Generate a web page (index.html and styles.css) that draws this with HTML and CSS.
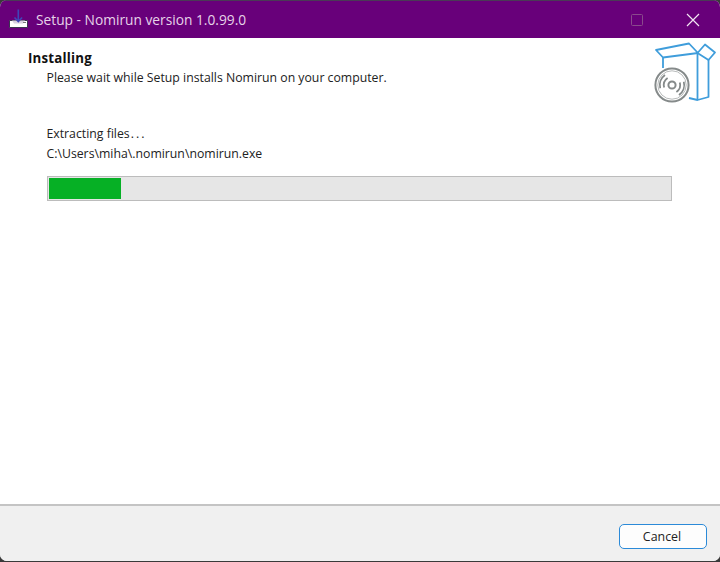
FILE: index.html
```html
<!DOCTYPE html>
<html lang="en">
<head>
<meta charset="utf-8">
<title>Setup - Nomirun version 1.0.99.0</title>
<link rel="stylesheet" href="styles.css">
</head>
<body>
<div class="window">
  <header class="titlebar">
    <svg class="app-icon" width="20" height="20" viewBox="0 0 20 20">
      <path d="M0.5 11.5H18.5V18.5H0.5Z" fill="#fff" stroke="#3a3550" stroke-width="1"/>
      <path d="M3 11.5H16L14 14.5H5Z" fill="#d8d0e0"/>
      <rect x="14" y="13" width="3" height="1" fill="#777"/>
      <path d="M9.3 0.5V12M5.5 8.5L9.3 12.5L13.1 8.5" fill="none" stroke="#3f46b8" stroke-width="1.6"/>
    </svg>
    <span class="title">Setup - Nomirun version 1.0.99.0</span>
    <div class="controls">
      <span class="ctl"></span>
      <span class="ctl">
        <svg width="12" height="12" viewBox="0 0 12 12"><rect x="0.5" y="0.5" width="11" height="11" rx="1" fill="none" stroke="#8a4a8c"/></svg>
      </span>
      <span class="ctl">
        <svg width="14" height="14" viewBox="0 0 14 14"><path d="M1 1L13 13M13 1L1 13" stroke="#f2e6f2" stroke-width="1.2" fill="none"/></svg>
      </span>
    </div>
  </header>
  <section class="head">
    <div class="head-text">
      <h1 class="heading">Installing</h1>
      <p class="sub">Please wait while Setup installs Nomirun on your computer.</p>
    </div>
    <svg class="box-icon" width="64" height="64" viewBox="0 0 64 64">
      <g fill="none" stroke="#3f9ddb" stroke-width="1.8" stroke-linejoin="round">
        <path d="M2 10L35 3.5L44 13L9 17.5Z"/>
        <path d="M9 17.5V28"/>
        <path d="M43.5 13V60"/>
        <path d="M43.5 13L51 4.5L61 12.5L54.5 20Z"/>
        <path d="M54.5 20V57L43.5 60L35 58"/>
      </g>
      <g fill="none" stroke="#858a8a">
        <circle cx="18" cy="45" r="16.6" stroke-width="2" fill="#fff"/>
        <circle cx="18" cy="45" r="14.2" stroke-width="1" stroke="#b8bbbb"/>
        <circle cx="18" cy="45" r="3.6" stroke-width="2"/>
        <path d="M11.5 40A8.5 8.5 0 0 0 11.5 50M24.5 40A8.5 8.5 0 0 1 24.5 50M8 38A12.3 12.3 0 0 0 8 52M28 38A12.3 12.3 0 0 1 28 52" stroke-width="1.8" transform="rotate(20 18 45)"/>
      </g>
    </svg>
  </section>
  <main class="content">
    <p class="line">Extracting files<span class="dots">...</span></p>
    <p class="line">C:\Users\miha\.nomirun\nomirun.exe</p>
    <div class="progress"><div class="bar" style="width:72px"></div></div>
  </main>
  <footer class="footer">
    <button class="cancel" type="button">Cancel</button>
  </footer>
</div>
</body>
</html>
```
FILE: styles.css
```css
* { box-sizing: border-box; }
html, body { margin: 0; padding: 0; height: 100%; background: #3a3a3a; overflow: hidden; }
body { font-family: "Open Sans", "Noto Sans", "Liberation Sans", sans-serif; font-size: 12.27px; color: #222; }
.window { width: 720px; height: 561px; display: flex; flex-direction: column; background: #fff; border-radius: 7px; overflow: hidden; }
.titlebar { height: 38px; flex: none; background: #68007a; display: flex; align-items: center; padding-left: 9px; border-top: 1px solid #4a3a55; }
.app-icon { flex: none; margin-top: -2px; }
.title { margin-left: 7px; color: #e6d3e8; font-size: 13.75px; white-space: nowrap; }
.controls { margin-left: auto; display: flex; height: 100%; margin-right: -1px; }
.ctl { width: 56px; display: flex; align-items: center; justify-content: center; }
.head { height: 66px; flex: none; display: flex; justify-content: space-between; }
.head-text { padding: 12px 0 0 28px; }
.heading { margin: 0; font-size: 13.3px; letter-spacing: 0.2px; font-weight: 700; line-height: 16px; color: #111; }
.sub { margin: 4px 0 0 18.5px; line-height: 16px; }
.box-icon { margin: 2px 2px 0 0; flex: none; }
.content { flex: 1; padding: 22px 48px 0 46.5px; }
.line { margin: 0 0 4px; line-height: 16px; }
.dots { letter-spacing: 2px; margin-left: 1px; }
.progress { margin: 14px 0 0 0.5px; height: 25px; background: #e6e6e6; border: 1px solid #bcbcbc; padding: 1px; }
.bar { height: 100%; background: #06b025; }
.footer { height: 57px; flex: none; background: #f0f0f0; border-top: 2px solid #c4c4c4; display: flex; justify-content: flex-end; align-items: flex-start; padding: 18px 13px 0 0; }
.cancel { width: 88px; height: 25px; padding: 0 2px 0 0; background: #fdfdfd; border: 1.5px solid #2b8ad8; border-radius: 5px; font: 12.4px "Open Sans", "Noto Sans", sans-serif; color: #222; }
```
